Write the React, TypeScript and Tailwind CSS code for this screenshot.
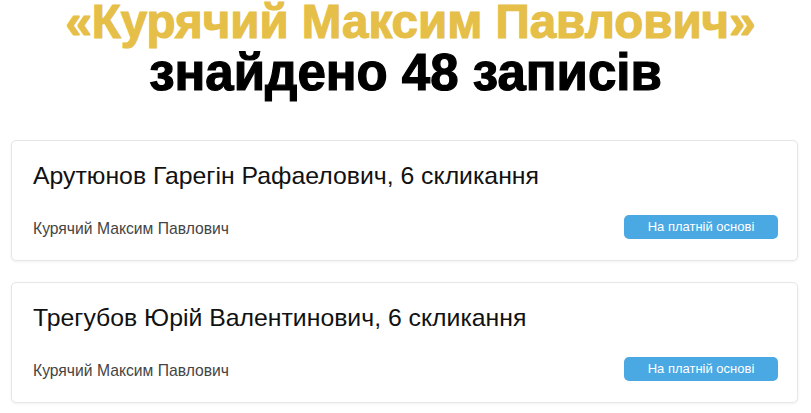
export default function App() {
  const items = [
    { name: "Арутюнов Гарегін Рафаелович, 6 скликання", who: "Курячий Максим Павлович", tag: "На платній основі" },
    { name: "Трегубов Юрій Валентинович, 6 скликання", who: "Курячий Максим Павлович", tag: "На платній основі" },
  ];

  return (
    <div className="min-h-screen bg-white" style={{ fontFamily: "'Liberation Sans', Arial, sans-serif" }}>
      <div className="text-center font-bold leading-none [-webkit-text-stroke:1.2px_currentColor]">
        <h1 className="pt-[2px] pl-[10px] text-[47.5px] leading-[40px] text-[#e5bf48]">«Курячий Максим Павлович»</h1>
        <h2 className="mt-[6px] text-[51px] leading-[50px] text-black">знайдено 48 записів</h2>
      </div>

      <div className="mt-[42px] flex flex-col gap-[21px] px-[11px] pr-[13px]">
        {items.map((it, idx) => (
          <div
            key={idx}
            className="h-[121px] rounded-[5px] border border-[#e6e6e6] bg-white px-[21px] pt-[20px] shadow-[0_1px_3px_rgba(0,0,0,0.06)]"
          >
            <div className="text-[24.8px] leading-[30px] text-[#111]">{it.name}</div>
            <div className="mt-[22px] flex items-center justify-between">
              <span className="pt-[4px] text-[15.7px] text-[#444]">{it.who}</span>
              <span className="mr-[-2px] flex h-[24px] w-[154px] items-center justify-center rounded-[5px] bg-[#4aa8e2] text-[13px] text-white">
                {it.tag}
              </span>
            </div>
          </div>
        ))}
      </div>
    </div>
  );
}
